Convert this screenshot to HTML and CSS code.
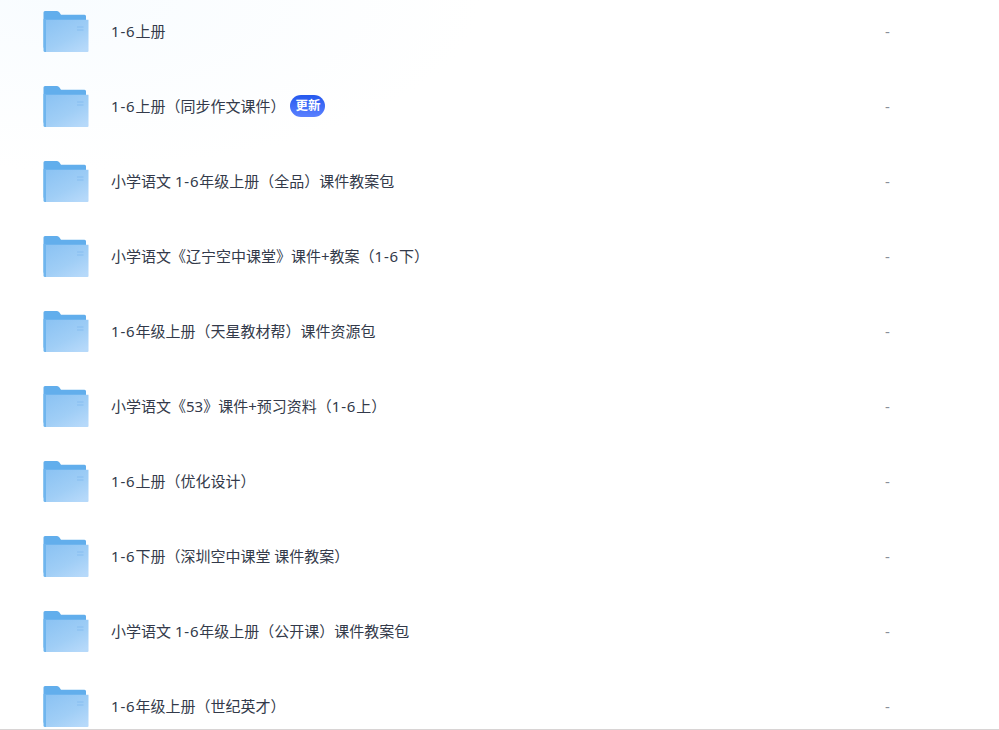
FILE: index.html
```html
<!DOCTYPE html>
<html lang="zh-CN">
<head>
    <meta charset="UTF-8">
    <meta name="viewport" content="width=device-width, initial-scale=1.0">
    <title>文件列表</title>
    <link rel="stylesheet" href="styles.css">
</head>
<body>
<svg class="defs" width="0" height="0">
    <defs>
        <linearGradient id="folder-front" x1="0.1" y1="0" x2="0.8" y2="1">
            <stop offset="0" stop-color="#8cc3f3"/>
            <stop offset="0.6" stop-color="#a0cef6"/>
            <stop offset="1" stop-color="#b6d9fa"/>
        </linearGradient>
        <symbol id="folder" viewBox="0 0 46 41">
            <path d="M0.5 1.5Q0.5 0 2 0H14Q15.5 0 16.5 1.5L18 3.8H41.5Q43 3.8 43 5.3V38H2.5Q0.5 38 0.5 36Z" fill="#62aeec"/>
            <path d="M0.5 8V39.5Q0.5 41 2 41H3V8Z" fill="#6fb5ee"/>
            <path d="M3 8.7H45.5V40Q45.5 41 44.5 41H3Z" fill="url(#folder-front)"/>
            <path d="M34 16H40.5M34 19H40.5" stroke="#86bdf0" stroke-width="1"/>
        </symbol>
    </defs>
</svg>
<div class="container">
    <ul class="file-list">
        <li class="file-row">
            <svg class="folder-icon"><use href="#folder"/></svg>
            <div class="file-name"><span><span class="num">1-6</span>上册</span></div>
            <div class="file-size">-</div>
        </li>
        <li class="file-row">
            <svg class="folder-icon"><use href="#folder"/></svg>
            <div class="file-name"><span><span class="num">1-6</span>上册（同步作文课件）</span><span class="badge">更新</span></div>
            <div class="file-size">-</div>
        </li>
        <li class="file-row">
            <svg class="folder-icon"><use href="#folder"/></svg>
            <div class="file-name"><span>小学语文 <span class="num">1-6</span>年级上册（全品）课件教案包</span></div>
            <div class="file-size">-</div>
        </li>
        <li class="file-row">
            <svg class="folder-icon"><use href="#folder"/></svg>
            <div class="file-name"><span>小学语文《辽宁空中课堂》课件+教案（<span class="num">1-6</span>下）</span></div>
            <div class="file-size">-</div>
        </li>
        <li class="file-row">
            <svg class="folder-icon"><use href="#folder"/></svg>
            <div class="file-name"><span><span class="num">1-6</span>年级上册（天星教材帮）课件资源包</span></div>
            <div class="file-size">-</div>
        </li>
        <li class="file-row">
            <svg class="folder-icon"><use href="#folder"/></svg>
            <div class="file-name"><span>小学语文《53》课件+预习资料（<span class="num">1-6</span>上）</span></div>
            <div class="file-size">-</div>
        </li>
        <li class="file-row">
            <svg class="folder-icon"><use href="#folder"/></svg>
            <div class="file-name"><span><span class="num">1-6</span>上册（优化设计）</span></div>
            <div class="file-size">-</div>
        </li>
        <li class="file-row">
            <svg class="folder-icon"><use href="#folder"/></svg>
            <div class="file-name"><span><span class="num">1-6</span>下册（深圳空中课堂 课件教案）</span></div>
            <div class="file-size">-</div>
        </li>
        <li class="file-row">
            <svg class="folder-icon"><use href="#folder"/></svg>
            <div class="file-name"><span>小学语文 <span class="num">1-6</span>年级上册（公开课）课件教案包</span></div>
            <div class="file-size">-</div>
        </li>
        <li class="file-row">
            <svg class="folder-icon"><use href="#folder"/></svg>
            <div class="file-name"><span><span class="num">1-6</span>年级上册（世纪英才）</span></div>
            <div class="file-size">-</div>
        </li>
    </ul>
</div>
</body>
</html>
```

FILE: styles.css
```css
html, body {
    margin: 0;
    height: 100%;
    overflow: hidden;
}

body {
    font-family: "Noto Sans", "Noto Sans CJK SC", sans-serif;
    font-size: 15px;
    color: #333;
    background: #fff;
}

.defs {
    display: block;
    height: 0;
}

.container {
    height: 730px;
    box-sizing: border-box;
    overflow: hidden;
    border-bottom: 1px solid #d8d4d4;
    background: radial-gradient(ellipse 420px 170px at 60px 0, #f8fcff, #fff);
}

.file-list {
    list-style: none;
    margin: -6px 0 0;
    padding: 0;
}

.file-row {
    display: grid;
    grid-template-columns: 46px 1fr 114px;
    column-gap: 22px;
    align-items: center;
    height: 75px;
    padding-left: 43px;
}

.folder-icon {
    width: 46px;
    height: 41px;
    margin-top: -1px;
}

.file-name {
    display: flex;
    align-items: center;
    margin-top: -2px;
    line-height: 22px;
    color: #333a4a;
}

.num {
    letter-spacing: 0.8px;
}

.file-size {
    margin-top: -1px;
    color: #8a8f99;
    line-height: 22px;
}

.badge {
    width: 35px;
    height: 22px;
    margin-left: 5px;
    border-radius: 11px;
    background: linear-gradient(180deg, #2458ee, #5a80ff);
    color: #fff;
    font-size: 12.5px;
    font-weight: 700;
    line-height: 22px;
    text-align: center;
}
```
